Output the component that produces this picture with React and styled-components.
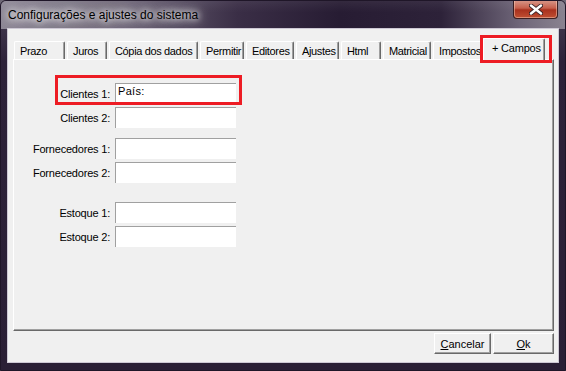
import React from 'react'
import styled, { createGlobalStyle } from 'styled-components'

const GlobalStyle = createGlobalStyle`
  html, body {
    margin: 0;
    padding: 0;
    background: #6d6775;
  }
  body {
    font-family: "Liberation Sans", Arial, sans-serif;
    font-size: 11px;
  }
`

const tabs = [
  { label: 'Prazo', width: 51 },
  { label: 'Juros', width: 40 },
  { label: 'Cópia dos dados', width: 89 },
  { label: 'Permitir', width: 44 },
  { label: 'Editores', width: 48 },
  { label: 'Ajustes', width: 43 },
  { label: 'Html', width: 40 },
  { label: 'Matricial', width: 48 },
  { label: 'Impostos', width: 52 },
]

const fields = [
  { label: 'Clientes 1:', value: 'País:', space: 0, mark: true },
  { label: 'Clientes 2:', space: 3 },
  { label: 'Fornecedores 1:', space: 10 },
  { label: 'Fornecedores 2:', space: 3 },
  { label: 'Estoque 1:', space: 19 },
  { label: 'Estoque 2:', space: 3 },
]

function CloseIcon() {
  return (
    <svg width="14" height="11" viewBox="0 0 14 11">
      <path d="M2 1.5 L12 9.5 M12 1.5 L2 9.5" stroke="#3a2326" strokeWidth="4.2" strokeLinecap="round" />
      <path d="M2 1.5 L12 9.5 M12 1.5 L2 9.5" stroke="#ffffff" strokeWidth="2.4" strokeLinecap="round" />
    </svg>
  )
}

export default function App() {
  return (
    <>
      <GlobalStyle />
      <Window>
        <TitleBar>
          <Title>Configurações e ajustes do sistema</Title>
          <CloseButton>
            <CloseIcon />
          </CloseButton>
        </TitleBar>
        <Client>
          <TabStrip>
            {tabs.map((t) => (
              <Tab key={t.label} $w={t.width}>{t.label}</Tab>
            ))}
            <ActiveTab>
              + Campos
              <Highlight $l={-4} $t={-4} $w={72} $h={28} />
            </ActiveTab>
          </TabStrip>
          <Panel>
            {fields.map((f) => (
              <Row key={f.label} $space={f.space}>
                <Label>{f.label}</Label>
                <Field>{f.value}</Field>
                {f.mark && <Highlight $l={41} $t={-8} $w={187} $h={30} />}
              </Row>
            ))}
          </Panel>
          <ButtonRow>
            <Button $w={57}><u>C</u>ancelar</Button>
            <Button $w={61}><u>O</u>k</Button>
          </ButtonRow>
        </Client>
      </Window>
    </>
  )
}

const Window = styled.div`
  width: 566px;
  height: 371px;
  box-sizing: border-box;
  padding: 0 7px 8px 7px;
  display: flex;
  flex-direction: column;
  border-radius: 6px 6px 0 0;
  border: 1px solid #1f1628;
  overflow: hidden;
  background: linear-gradient(180deg, #4a4056 0px, #2d2239 60px, #2a1f35 100%);
`

const TitleBar = styled.div`
  height: 28px;
  margin: 0 -7px;
  padding: 0 7px;
  display: flex;
  align-items: flex-start;
  justify-content: space-between;
  background:
    linear-gradient(180deg, rgba(255,255,255,0.06) 0%, rgba(0,0,0,0) 40%),
    linear-gradient(90deg, #8d8795 0%, #6e6678 22%, #3a2e46 42%, #271c33 60%, #2d2239 78%, #6f6679 92%, #8a8390 100%);
`

const Title = styled.div`
  margin-top: 7px;
  font-family: "Liberation Sans", Arial, sans-serif;
  font-size: 12px;
  color: #000;
  padding: 0 6px 0 0;
  text-shadow: 0 0 6px #fff, 0 0 10px #eee, 0 0 14px #ddd;
`

const CloseButton = styled.div`
  width: 45px;
  height: 19px;
  margin-top: -1px;
  margin-right: 0;
  box-sizing: border-box;
  border: 1px solid #3b1f22;
  border-top: none;
  border-radius: 0 0 4px 4px;
  display: flex;
  align-items: center;
  justify-content: center;
  background: linear-gradient(180deg, #d99a8c 0%, #c7604c 45%, #a9311e 55%, #c04f32 100%);
  box-shadow: inset 0 0 0 1px rgba(255, 220, 200, 0.45);
`

const Client = styled.div`
  flex: 1;
  background: #f0f0f0;
  box-shadow: 0 0 0 1px #cdc8d4;
  padding: 9px 4px 8px 5px;
  display: flex;
  flex-direction: column;
`

const TabStrip = styled.div`
  height: 21px;
  display: flex;
  align-items: flex-end;
  gap: 2px;
  padding-left: 1px;
  position: relative;
  z-index: 1;
`

const Tab = styled.div`
  width: ${(p) => p.$w}px;
  height: 18px;
  box-sizing: border-box;
  padding: 3px 0 0 5px;
  white-space: nowrap;
  overflow: hidden;
  letter-spacing: -0.35px;
  color: #000;
  background: #f0f0f0;
  border-top: 1px solid #fff;
  border-left: 1px solid #fff;
  border-right: 1px solid #696969;
  box-shadow: inset -1px 0 0 #a0a0a0;
  border-radius: 2px 2px 0 0;
`

const ActiveTab = styled.div`
  position: relative;
  width: 62px;
  height: 23px;
  margin-left: -4px;
  margin-bottom: -2px;
  box-sizing: border-box;
  padding: 3px 0 0 8px;
  white-space: nowrap;
  letter-spacing: -0.2px;
  color: #000;
  background: #f0f0f0;
  border-top: 1px solid #fff;
  border-left: 1px solid #fff;
  border-right: 1px solid #696969;
  box-shadow: inset -1px 0 0 #a0a0a0;
  border-radius: 2px 2px 0 0;
`

const Highlight = styled.div`
  position: absolute;
  left: ${(p) => p.$l}px;
  top: ${(p) => p.$t}px;
  width: ${(p) => p.$w}px;
  height: ${(p) => p.$h}px;
  box-sizing: border-box;
  border: 3px solid #ed1c24;
  pointer-events: none;
`

const Panel = styled.div`
  height: 272px;
  box-sizing: border-box;
  border-top: 1px solid #fff;
  border-left: 1px solid #fff;
  border-right: 1px solid #696969;
  border-bottom: 1px solid #696969;
  box-shadow: inset -1px -1px 0 #a0a0a0;
  padding-top: 23px;
  display: flex;
  flex-direction: column;
`

const Row = styled.div`
  position: relative;
  display: flex;
  align-items: center;
  height: 21px;
  margin-top: ${(p) => p.$space}px;
`

const Label = styled.div`
  width: 96px;
  margin-right: 5px;
  text-align: right;
  color: #000;
  white-space: nowrap;
  letter-spacing: -0.2px;
`

const Field = styled.div`
  width: 121px;
  height: 21px;
  box-sizing: border-box;
  background: #fff;
  border-top: 1px solid #a0a0a0;
  border-left: 1px solid #a0a0a0;
  padding: 1px 0 0 2px;
  color: #000;
  letter-spacing: 0.3px;
`

const ButtonRow = styled.div`
  margin-top: 2px;
  display: flex;
  justify-content: flex-end;
  gap: 2px;
`

const Button = styled.div`
  width: ${(p) => p.$w}px;
  height: 21px;
  box-sizing: border-box;
  display: flex;
  align-items: center;
  justify-content: center;
  background: #f0f0f0;
  color: #000;
  border-top: 1px solid #fff;
  border-left: 1px solid #fff;
  border-right: 1px solid #696969;
  border-bottom: 1px solid #696969;
  box-shadow: inset -1px -1px 0 #a0a0a0;
`
